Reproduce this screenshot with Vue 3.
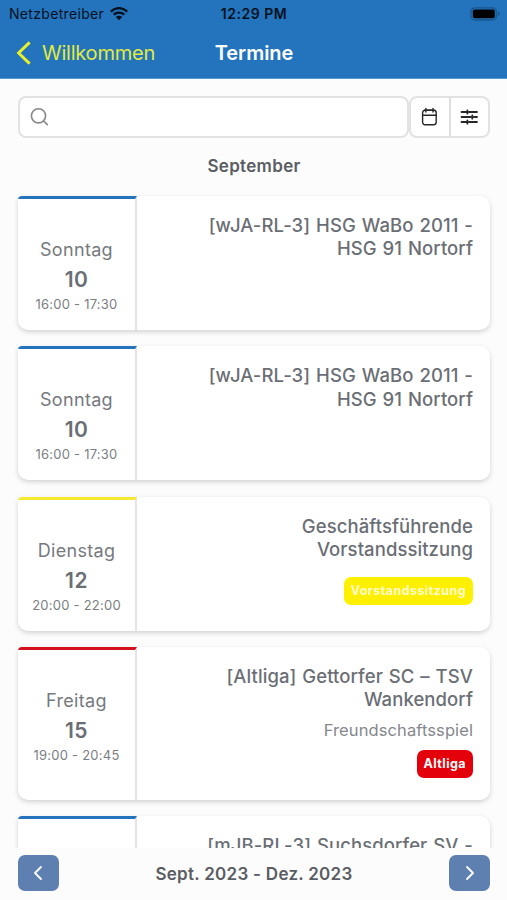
<script setup>
const events = [
  { day: 'Sonntag', date: '10', time: '16:00 - 17:30', title: ['[wJA-RL-3] HSG WaBo 2011 -', 'HSG 91 Nortorf'], kind: 'match' },
  { day: 'Sonntag', date: '10', time: '16:00 - 17:30', title: ['[wJA-RL-3] HSG WaBo 2011 -', 'HSG 91 Nortorf'], kind: 'match' },
  { day: 'Dienstag', date: '12', time: '20:00 - 22:00', title: ['Geschäftsführende', 'Vorstandssitzung'], badge: 'Vorstandssitzung', kind: 'board' },
  { day: 'Freitag', date: '15', time: '19:00 - 20:45', title: ['[Altliga] Gettorfer SC – TSV', 'Wankendorf'], note: 'Freundschaftsspiel', badge: 'Altliga', kind: 'senior' },
  { title: ['[mJB-RL-3] Suchsdorfer SV -'], kind: 'match' },
]
</script>

<template>
  <div class="screen">
    <header class="top">
      <div class="status">
        <div class="carrier">
          <span>Netzbetreiber</span>
          <svg class="wifi" width="20" height="14" viewBox="0 0 20 14">
            <path d="M1.8 4.6C6.5 0 13.5 0 18.2 4.6M4.8 7.7c3-2.8 7.4-2.8 10.4 0" fill="none" stroke="#03111f" stroke-width="2.4" />
            <path d="M6.8 9.9c1.9-1.6 4.5-1.6 6.4 0L10 13.2z" fill="#03111f" />
          </svg>
        </div>
        <span class="clock">12:29 PM</span>
        <svg class="battery" width="32" height="14" viewBox="0 0 32 14">
          <rect x="2" y=".8" width="25.4" height="12.2" rx="4" fill="none" stroke="#17568e" stroke-width="1.3" />
          <rect x="3.8" y="2.4" width="22" height="8.8" rx="1.8" fill="#000" />
          <path d="M29 4.6c2 .7 2 3.7 0 4.4z" fill="#17568e" />
        </svg>
      </div>
      <div class="nav">
        <div class="back">
          <svg width="16" height="24" viewBox="0 0 16 24">
            <path d="M14.6 1.4 3.6 12l11 10.6" fill="none" stroke="#ecf02a" stroke-width="2.9" />
          </svg>
          <span>Willkommen</span>
        </div>
        <h1>Termine</h1>
      </div>
    </header>

    <main class="content">
      <div class="toolbar">
        <div class="search">
          <svg width="20" height="20" viewBox="0 0 20 20" fill="none" stroke="#85888c" stroke-width="1.6" stroke-linecap="round">
            <circle cx="8.5" cy="8.8" r="7.1" />
            <path d="m13.7 14 3.6 3.6" />
          </svg>
        </div>
        <div class="tools">
          <div class="tool">
            <svg width="18" height="20" viewBox="0 0 18 20" fill="none" stroke="#25272a" stroke-width="1.4" stroke-linecap="round">
              <rect x="1.6" y="3.3" width="13.6" height="14.4" rx="2.4" />
              <path d="M1.6 8.3h13.6M4.9 1.5v3.6M12 1.5v3.6M3.4 3.3h10" />
            </svg>
          </div>
          <div class="tool">
            <svg width="18" height="18" viewBox="0 0 18 18" fill="none" stroke="#25272a" stroke-width="1.8" stroke-linecap="round">
              <path d="M1.5 4h4.6M9 4h8M1.5 9h9.2M14 9h3M1.5 14h4.6M9 14h8M7.4 2.3v3.4M12.3 7.3v3.4M7.4 12.3v3.4" />
            </svg>
          </div>
        </div>
      </div>

      <h2>September</h2>

      <section class="list">
        <article v-for="(event, index) in events" :key="index" class="card" :class="event.kind">
          <div class="when">
            <span class="day">{{ event.day }}</span>
            <span class="date">{{ event.date }}</span>
            <span class="time">{{ event.time }}</span>
          </div>
          <div class="what">
            <h3><span v-for="line in event.title" :key="line">{{ line }}</span></h3>
            <p v-if="event.note">{{ event.note }}</p>
            <span v-if="event.badge" class="badge">{{ event.badge }}</span>
          </div>
        </article>
      </section>
    </main>

    <footer class="range">
      <button aria-label="Zurück">
        <svg width="20" height="20" viewBox="0 0 20 20"><path d="m12 4-6 6 6 6" /></svg>
      </button>
      <strong>Sept. 2023 - Dez. 2023</strong>
      <button aria-label="Weiter">
        <svg width="20" height="20" viewBox="0 0 20 20"><path d="m8 4 6 6-6 6" /></svg>
      </button>
    </footer>
  </div>
</template>

<style>
body { margin: 0; background: #fcfcfd; }
</style>

<style scoped>
* { box-sizing: border-box; }
h1, h2, h3, p { margin: 0; }
svg { display: block; flex: none; }
.screen { width: 507px; height: 900px; overflow: hidden; display: flex; flex-direction: column; background: #fcfcfd; color: #6b6f75; font-family: Inter, sans-serif; }
.top { height: 79px; flex: none; background: #2374bc; border-bottom: 1px solid #579bd0; }
.status { height: 27px; padding: 0 6px 0 9px; display: grid; grid-template-columns: 1fr auto 1fr; align-items: center; color: #03111f; font-size: 14px; line-height: 18px; }
.carrier { display: flex; align-items: center; gap: 5px; letter-spacing: .32px; }
.clock { margin-right: 2px; font-weight: 600; letter-spacing: .5px; }
.battery { justify-self: end; }
.nav { height: 51px; padding: 0 14px 0 15px; display: grid; grid-template-columns: 1fr auto 1fr; align-items: center; }
.back { display: flex; align-items: center; gap: 11px; color: #e2eb3c; font-size: 20px; letter-spacing: -.23px; }
h1 { color: #fff; font-size: 20px; font-weight: 600; letter-spacing: -.05px; }
.content { height: 769px; flex: none; padding: 17px 17px 0 18px; overflow: hidden; }
.toolbar { height: 42px; display: flex; }
.search { width: 391px; padding-left: 10px; display: flex; align-items: center; background: #fff; border: 2px solid #e0e2e4; border-radius: 8px; }
.tools { flex: 1; display: flex; background: #fff; border: 2px solid #e0e2e4; border-radius: 8px; }
.tool { flex: 1; display: flex; align-items: center; justify-content: center; }
.tool + .tool { border-left: 2px solid #dcdee1; }
h2 { height: 58px; padding-top: 17px; text-align: center; font-size: 17px; line-height: 22px; font-weight: 600; letter-spacing: .32px; color: #5a5d62; }
.list { display: flex; flex-direction: column; gap: 16.3px; }
.card { height: 134px; flex: none; display: grid; grid-template-columns: 119px 1fr; background: #fff; border-radius: 4px 10px 10px 10px; box-shadow: 0 2px 5px rgba(0, 0, 0, .17); overflow: hidden; }
.card.senior { height: 153px; }
.when { border-top: 3px solid #2374bc; border-right: 2px solid #e4e4e6; padding-top: 38px; display: flex; flex-direction: column; align-items: center; }
.board .when { border-top-color: #f6e92f; }
.senior .when { border-top-color: #d3121d; }
.day { font-size: 18px; line-height: 26px; letter-spacing: .32px; color: #76797e; }
.date { padding-top: 1px; font-size: 21px; line-height: 31px; font-weight: 600; letter-spacing: .4px; }
.time { font-size: 13px; line-height: 18px; letter-spacing: .24px; color: #7b7e83; }
.what { padding: 18px 17px 0 0; display: flex; flex-direction: column; align-items: flex-end; text-align: right; }
h3 { font-size: 18.5px; line-height: 23.2px; font-weight: 500; letter-spacing: .08px; word-spacing: .9px; white-space: nowrap; }
h3 span { display: block; }
p { margin-top: 8px; font-size: 16.5px; line-height: 22px; letter-spacing: .1px; color: #85888c; }
.badge { height: 28px; margin-top: 16px; padding: 0 7px; border-radius: 7px; font-size: 12.5px; line-height: 28px; font-weight: 700; letter-spacing: .43px; color: #fff; background: #fff000; }
.board .badge { color: #fffbd0; }
.senior .badge { margin-top: 9px; background: #e3000b; }
.range { height: 52px; padding: 7px 17px 9px 18px; display: flex; align-items: center; justify-content: space-between; background: #fcfcfd; }
.range strong { padding-top: 1px; font-size: 17px; font-weight: 600; letter-spacing: .28px; color: #5a5d62; }
button { width: 41px; height: 36px; padding: 0; border: 0; border-radius: 7px; background: #5e80b0; display: flex; align-items: center; justify-content: center; }
button path { fill: none; stroke: #fff; stroke-width: 1.8; stroke-linecap: round; stroke-linejoin: round; }
</style>
